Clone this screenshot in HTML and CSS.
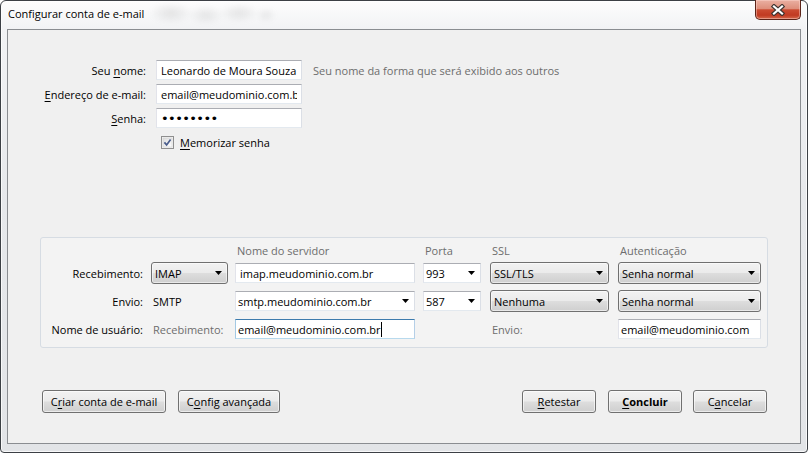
FILE: index.html
```html
<!DOCTYPE html>
<html lang="pt-BR">
<head>
<meta charset="utf-8">
<title>Configurar conta de e-mail</title>
<link rel="stylesheet" href="styles.css">
</head>
<body>
<div class="window">
  <div class="titlebar">
    <span class="title">Configurar conta de e-mail</span>
    <button class="close" aria-label="Fechar">
      <svg width="14" height="12" viewBox="0 0 14 12">
        <path d="M3 2.5 L11 9.5 M11 2.5 L3 9.5" stroke="#3e3430" stroke-width="4.4" stroke-linecap="square" fill="none"/>
        <path d="M3 2.5 L11 9.5 M11 2.5 L3 9.5" stroke="#ffffff" stroke-width="2.2" stroke-linecap="square" fill="none"/>
      </svg>
    </button>
  </div>
  <div class="client">
    <div class="identity">
      <label class="lbl" for="nome">Seu <u>n</u>ome:</label>
      <input class="field" id="nome" type="text" value="Leonardo de Moura Souza">
      <span class="hint">Seu nome da forma que será exibido aos outros</span>

      <label class="lbl" for="email"><u>E</u>ndereço de e-mail:</label>
      <input class="field" id="email" type="text" value="email@meudominio.com.br">
      <span></span>

      <label class="lbl" for="senha"><u>S</u>enha:</label>
      <input class="field pwd" id="senha" type="password" value="12345678">
      <span></span>

      <div class="remember">
        <span class="checkbox" role="checkbox" aria-checked="true">
          <svg width="13" height="13" viewBox="0 0 13 13">
            <defs>
              <linearGradient id="cbg" x1="0" y1="0" x2="1" y2="1">
                <stop offset="0" stop-color="#dcdcdc"/>
                <stop offset="1" stop-color="#ffffff"/>
              </linearGradient>
            </defs>
            <rect x="0.5" y="0.5" width="12" height="12" fill="#f4f4f4" stroke="#8f8f8f"/>
            <rect x="2" y="2" width="9" height="9" fill="url(#cbg)" stroke="#cfcfcf" stroke-width="0.6"/>
            <path d="M3.4 6.4 L5.6 8.9 L9.6 3.4" stroke="#4a5d8c" stroke-width="1.7" fill="none"/>
          </svg>
        </span>
        <span><u>M</u>emorizar senha</span>
      </div>
    </div>

    <div class="server-box">
      <div class="cols">
        <span></span>
        <span></span>
        <span class="colhead">Nome do servidor</span>
        <span class="colhead">Porta</span>
        <span class="colhead">SSL</span>
        <span class="colhead">Autenticação</span>
      </div>
      <div class="grid">
        <span class="rowlabel">Recebimento:</span>
        <div class="select w-proto"><span>IMAP</span><svg class="arrow" width="7" height="4" viewBox="0 0 7 4"><path d="M0 0h7L3.5 4z"/></svg></div>
        <input class="field w-server pad4" type="text" value="imap.meudominio.com.br">
        <div class="combo w-port"><span>993</span><svg class="arrow" width="7" height="4" viewBox="0 0 7 4"><path d="M0 0h7L3.5 4z"/></svg></div>
        <div class="select w-ssl"><span>SSL/TLS</span><svg class="arrow" width="7" height="4" viewBox="0 0 7 4"><path d="M0 0h7L3.5 4z"/></svg></div>
        <div class="select w-auth"><span>Senha normal</span><svg class="arrow" width="7" height="4" viewBox="0 0 7 4"><path d="M0 0h7L3.5 4z"/></svg></div>

        <span class="rowlabel">Envio:</span>
        <span class="note">SMTP</span>
        <div class="combo w-server"><span>smtp.meudominio.com.br</span><svg class="arrow" width="7" height="4" viewBox="0 0 7 4"><path d="M0 0h7L3.5 4z"/></svg></div>
        <div class="combo w-port"><span>587</span><svg class="arrow" width="7" height="4" viewBox="0 0 7 4"><path d="M0 0h7L3.5 4z"/></svg></div>
        <div class="select w-ssl"><span>Nenhuma</span><svg class="arrow" width="7" height="4" viewBox="0 0 7 4"><path d="M0 0h7L3.5 4z"/></svg></div>
        <div class="select w-auth"><span>Senha normal</span><svg class="arrow" width="7" height="4" viewBox="0 0 7 4"><path d="M0 0h7L3.5 4z"/></svg></div>

        <span class="rowlabel">Nome de usuário:</span>
        <span class="note muted">Recebimento:</span>
        <div class="field focused w-server"><span>email@meudominio.com.br</span><span class="caret"></span></div>
        <span></span>
        <span class="note2 muted">Envio:</span>
        <input class="field w-auth" type="text" value="email@meudominio.com">
      </div>
    </div>

    <div class="actions">
      <div class="group left">
        <button class="btn w-create">C<u>r</u>iar conta de e-mail</button>
        <button class="btn w-adv">C<u>o</u>nfig avançada</button>
      </div>
      <div class="group right">
        <button class="btn w-std first"><u>R</u>etestar</button>
        <button class="btn w-std bold"><u>C</u>oncluir</button>
        <button class="btn w-std">C<u>a</u>ncelar</button>
      </div>
    </div>
  </div>
</div>
</body>
</html>
```

FILE: styles.css
```css
* { box-sizing: border-box; }

html, body {
  margin: 0;
  padding: 0;
}

body {
  width: 808px;
  height: 453px;
  overflow: hidden;
  background: #ffffff;
  font-family: "Open Sans", "Noto Sans", sans-serif;
  font-size: 11px;
  color: #000;
}

u {
  text-decoration-thickness: 1px;
  text-underline-offset: 2px;
}

.window {
  position: relative;
  width: 808px;
  height: 453px;
  border: 1px solid #3c4045;
  border-radius: 6px 6px 4px 4px;
  padding: 0 6px 8px 6px;
  background: linear-gradient(180deg, #fdfdfd 0px, #f1f2f4 30px, #e6e8eb 200px, #e2e4e7 100%);
  box-shadow: inset 0 0 0 1px rgba(255, 255, 255, 0.75);
  display: flex;
  flex-direction: column;
}

/* faint blurred glass backdrop behind the title bar */
.window::before {
  content: "";
  position: absolute;
  left: 150px;
  top: 0;
  width: 125px;
  height: 26px;
  background:
    radial-gradient(ellipse 22px 11px at 20px 12px, rgba(120, 120, 120, 0.16), transparent),
    radial-gradient(ellipse 18px 10px at 55px 14px, rgba(120, 120, 120, 0.14), transparent),
    radial-gradient(ellipse 20px 10px at 88px 12px, rgba(120, 120, 120, 0.15), transparent),
    radial-gradient(ellipse 10px 8px at 115px 14px, rgba(120, 120, 120, 0.12), transparent);
  filter: blur(2px);
  pointer-events: none;
}

.titlebar {
  position: relative;
  height: 28px;
  display: flex;
  justify-content: space-between;
  align-items: flex-start;
}

.title {
  margin: 5px 0 0 1px;
  line-height: 16px;
  text-shadow: 0 0 6px #fff, 0 0 3px #fff;
}

.close {
  margin-top: -1px;
  width: 46px;
  height: 20px;
  padding: 0;
  border: 1px solid #5b2419;
  border-top: none;
  border-radius: 0 0 5px 5px;
  background: linear-gradient(180deg, #eab0a2 0%, #de8f7b 45%, #cb4b31 52%, #c13a22 80%, #d5694c 100%);
  box-shadow: inset 0 0 0 1px rgba(255, 220, 210, 0.45);
  display: flex;
  align-items: center;
  justify-content: center;
}

.client {
  flex: 1;
  border: 1px solid #8a8d91;
  background: #f0f0f0;
  display: flex;
  flex-direction: column;
}

/* identity form */
.identity {
  margin-top: 30px;
  display: grid;
  grid-template-columns: 138px 146px auto;
  grid-auto-rows: 20px;
  column-gap: 10px;
  row-gap: 4px;
  align-items: center;
}

.lbl {
  text-align: right;
  white-space: nowrap;
}

.hint {
  padding-left: 1px;
  color: #6d6d6d;
  white-space: nowrap;
}

.field {
  height: 20px;
  padding: 0 4px;
  margin: 0;
  border: 1px solid;
  border-color: #abadb3 #dbdfe6 #e3e9ef #e2e3ea;
  background: #ffffff;
  font-family: inherit;
  font-size: 11px;
  color: #000;
  outline: none;
  border-radius: 0;
}

.pwd {
  font-family: "DejaVu Sans", sans-serif;
  font-size: 13px;
  letter-spacing: -0.6px;
}

.remember {
  grid-column: 2 / span 2;
  display: flex;
  align-items: center;
  gap: 6px;
  padding-left: 5px;
}

.checkbox {
  width: 13px;
  height: 13px;
  display: block;
}

.checkbox svg { display: block; }

/* server box */
.server-box {
  margin: 85px 0 0 32px;
  width: 728px;
  border: 1px solid #d6dce3;
  border-radius: 3px;
  background: #f3f3f3;
  padding: 5px 6px 7px 0;
}

.cols,
.grid {
  display: grid;
  grid-template-columns: 110px 84px 188px 67px 128px 143px;
}

.cols {
  height: 16px;
  line-height: 16px;
  margin-bottom: 3px;
}

.colhead {
  color: #6d6d6d;
  padding-left: 2px;
}

.grid {
  grid-auto-rows: 22px;
  row-gap: 6px;
  align-items: center;
}

.rowlabel {
  text-align: right;
  padding-right: 8px;
  white-space: nowrap;
}

.note { padding-left: 2px; }
.note2 { padding-left: 2px; }
.muted { color: #6d6d6d; }

.grid .field { padding: 0 2px; }
.grid .pad4 { padding-left: 4px; }

.select {
  height: 22px;
  display: flex;
  align-items: center;
  justify-content: space-between;
  padding: 0 5px 0 3px;
  border: 1px solid #707070;
  border-radius: 3px;
  background: linear-gradient(180deg, #f2f2f2 0%, #ebebeb 48%, #dddddd 52%, #cfcfcf 100%);
  box-shadow: inset 0 0 0 1px rgba(255, 255, 255, 0.55);
  white-space: nowrap;
}

.combo {
  height: 20px;
  display: flex;
  align-items: center;
  justify-content: space-between;
  padding: 0 5px 0 2px;
  border: 1px solid;
  border-color: #abadb3 #dbdfe6 #e3e9ef #e2e3ea;
  background: #ffffff;
  white-space: nowrap;
}

.arrow {
  display: block;
  flex: none;
  fill: #000;
}

.w-proto { width: 77px; }
.w-server { width: 180px; }
.w-port { width: 58px; }
.w-ssl { width: 119px; }
.w-auth { width: 143px; }

.focused {
  display: flex;
  align-items: center;
  border-color: #3d7bad #b5cfe7 #b7d9ed #a4c9e3;
  white-space: nowrap;
}

.caret {
  display: inline-block;
  width: 1px;
  height: 15px;
  background: #000;
}

/* buttons */
.actions {
  margin-top: 42px;
  padding: 0 33px 0 34px;
  display: flex;
  justify-content: space-between;
}

.group {
  display: flex;
}

.group.left { gap: 12px; }
.group.right { gap: 11px; }
.group.right .first { margin-right: 1px; }

.btn {
  height: 23px;
  padding: 0;
  border: 1px solid #707070;
  border-radius: 3px;
  background: linear-gradient(180deg, #f2f2f2 0%, #ebebeb 48%, #dddddd 52%, #cfcfcf 100%);
  box-shadow: inset 0 0 0 1px rgba(255, 255, 255, 0.6);
  font-family: inherit;
  font-size: 11px;
  color: #000;
  text-align: center;
  line-height: 20px;
}

.btn.bold { font-weight: 700; }

.w-create { width: 124px; }
.w-adv { width: 102px; }
.w-std { width: 74px; }
```
